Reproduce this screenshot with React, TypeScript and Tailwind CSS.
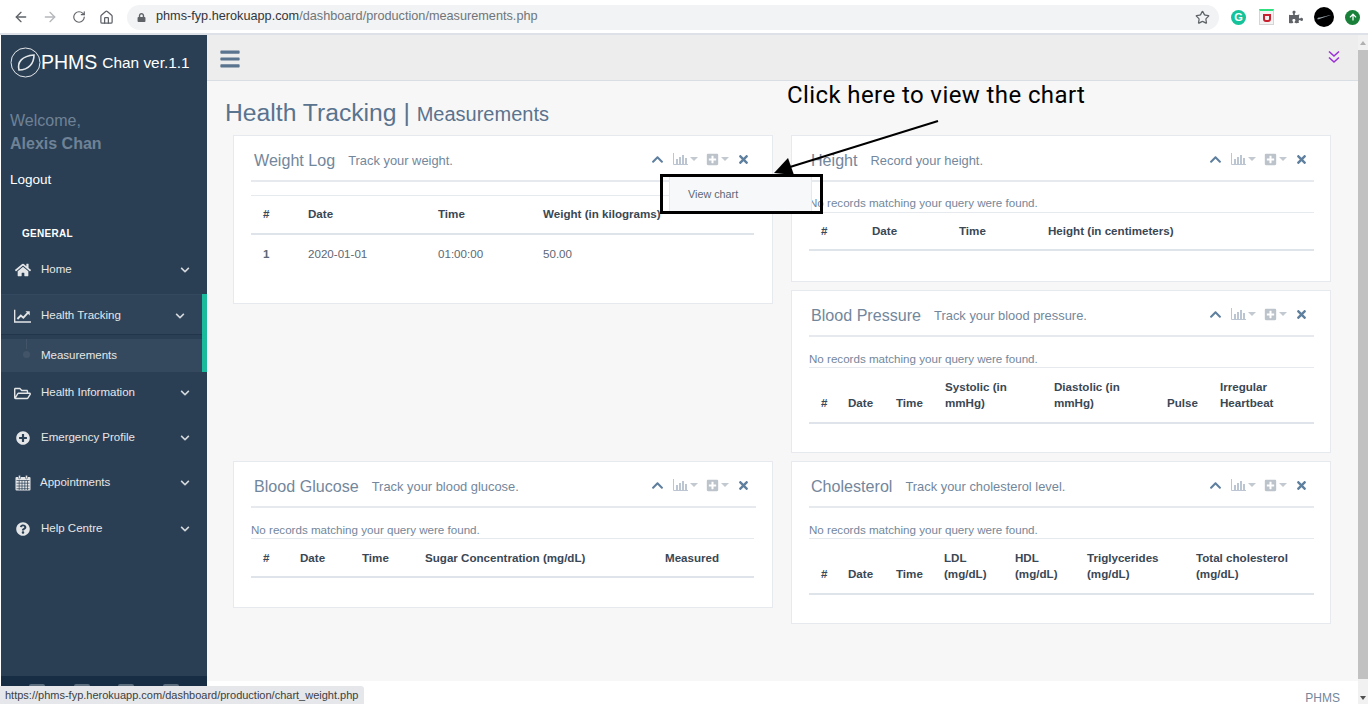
import React from "react";
import { ArrowLeft, ArrowRight, RotateCw, Home, Star } from "lucide-react";
import {
  FaHome, FaRegFolderOpen, FaPlusCircle, FaQuestionCircle,
  FaChevronDown, FaChevronUp, FaTimes, FaBars, FaPlusSquare, FaLock, FaPuzzlePiece, FaArrowUp,
} from "react-icons/fa";

const SANS = "font-['Liberation_Sans',Arial,sans-serif]";

function BarIcon() {
  return (
    <svg width="15" height="12" viewBox="0 0 15 12" className="block">
      <path d="M0.5 0V11.5H15" stroke="#bcc6d2" fill="none" />
      <path d="M3 6h2v5H3zM6 4h2v7H6zM9 2h2v9H9zM12 5h2v6h-2z" fill="#bcc6d2" />
    </svg>
  );
}

function LineChartIcon() {
  return (
    <svg width="20" height="16" viewBox="0 0 20 16" className="block">
      <path d="M0.8 0.5V15H20" stroke="#e3e5e7" strokeWidth="1.6" fill="none" />
      <path d="M4 11.5L8 7.5L11 10L16.5 4" stroke="#e3e5e7" strokeWidth="2.2" fill="none" />
      <path d="M13.5 2.5H18.5V7.5Z" fill="#e3e5e7" />
    </svg>
  );
}

function CalendarIcon() {
  return (
    <svg width="16" height="16" viewBox="0 0 16 16" className="block">
      <rect x="0.5" y="2" width="15" height="13.5" rx="1" fill="#e3e5e7" />
      <rect x="3.5" y="0.3" width="2" height="3.5" rx="0.8" fill="#e3e5e7" stroke="#2a3f54" strokeWidth="0.5" />
      <rect x="10.5" y="0.3" width="2" height="3.5" rx="0.8" fill="#e3e5e7" stroke="#2a3f54" strokeWidth="0.5" />
      <path d="M1.5 5.5H14.5M1.5 8.2H14.5M1.5 11H14.5M1.5 13.7H14.5M4.2 5.5V15M7 5.5V15M9.8 5.5V15M12.5 5.5V15" stroke="#2a3f54" strokeWidth="0.7" />
    </svg>
  );
}

function Caret() {
  return <span className="ml-[2px] w-0 h-0 border-x-[4px] border-x-transparent border-t-[4px] border-t-[#c3c9d0]" />;
}

function Tools() {
  return (
    <div className="flex items-center ml-auto">
      <FaChevronUp className="w-[13px] h-[13px] text-[#5f7f9f]" />
      <span className="ml-[9px] flex items-center"><BarIcon /><Caret /></span>
      <span className="ml-[8px] flex items-center"><FaPlusSquare className="w-[13px] h-[13px] text-[#bcc3cb]" /><Caret /></span>
      <FaTimes className="ml-[8px] w-[13px] h-[13px] text-[#5f7f9f]" />
    </div>
  );
}

type CardProps = {
  title: string;
  sub: string;
  height: number;
  headCols: { w: number; label: React.ReactNode }[];
  rows?: string[][];
  noRecords?: boolean;
  recordCls?: string;
  headCls?: string;
  titleCls?: string;
  tableW: number;
};

function Card({ title, sub, height, headCols, rows, noRecords = true, recordCls, headCls, titleCls, tableW }: CardProps) {
  return (
    <section className="bg-white border border-[#e6e9ed] px-[17px] pt-[14px] shrink-0" style={{ height }}>
      <div className={"flex items-center h-[32px] pb-[10px] border-b-2 border-[#e6e9ed] pr-[6px] -mr-[1px] " + (titleCls ?? "pl-[3px]")}>
        <h2 className="text-[16.1px] text-[#73879c] leading-[20px]">{title}</h2>
        <span className="text-[12.9px] text-[#73879c] ml-[13px] mt-[1px]">{sub}</span>
        <div className="ml-auto -mt-[2px] flex"><Tools /></div>
      </div>
      {noRecords ? (
        <div className={"text-[11.6px] text-[#73879c] leading-[14px] " + (recordCls ?? "mt-[15px] mb-[1px]")}>No records matching your query were found.</div>
      ) : (
        <div className="h-[13px]" />
      )}
      <table className="table-fixed border-collapse border-t border-[#e6e9ed] text-[11.6px] leading-[16px]" style={{ width: tableW }}>
        <colgroup>{headCols.map((c, i) => <col key={i} style={{ width: c.w }} />)}</colgroup>
        <thead>
          <tr className="border-b-2 border-[#dfe3ea]">
            {headCols.map((c, i) => (
              <th key={i} className={"text-left align-bottom font-bold text-[#3a4754] pl-[12px] pr-0 " + (headCls ?? "pt-[10px] pb-[10px]")}>{c.label}</th>
            ))}
          </tr>
        </thead>
        {rows && (
          <tbody>
            {rows.map((r, i) => (
              <tr key={i}>
                {r.map((v, j) => (
                  <td key={j} className={"pl-[12px] pt-[11px] pb-[10px] text-[#5c6873] " + (j === 0 ? "font-bold text-[#3d556f]" : "")}>{v}</td>
                ))}
              </tr>
            ))}
          </tbody>
        )}
      </table>
    </section>
  );
}

function NavItem({ icon, label, h, gap = "mr-[10px]" }: { icon: React.ReactNode; label: string; h: string; gap?: string }) {
  return (
    <div className={"flex items-center pl-[13px] text-[#e7e7e7] text-[11.5px] " + h}>
      <span className={"w-[17px] flex justify-center " + gap}>{icon}</span>
      <span>{label}</span>
      <FaChevronDown className="ml-auto w-[10px] h-[10px] text-[#d3d7db] mr-[17px]" />
    </div>
  );
}

export default function App() {
  return (
    <div className={"relative w-[1368px] h-[704px] overflow-hidden bg-white flex flex-col " + SANS}>
      {/* browser toolbar */}
      <header className="h-[35px] shrink-0 bg-white border-b-2 border-[#dfe1e8] flex items-center pl-[13px] pt-[1px] text-[#5f6368]">
        <ArrowLeft size={16} strokeWidth={2} />
        <ArrowRight size={16} strokeWidth={2} className="ml-[13px] text-[#b4b7bb]" />
        <RotateCw size={14} strokeWidth={2} className="ml-[14px]" />
        <Home size={15} strokeWidth={2} className="ml-[13px]" />
        <div className="ml-[13px] w-[1092px] h-[25px] rounded-full bg-[#f1f3f4] flex items-center pl-[10px] pr-[9px] text-[12.7px]">
          <FaLock className="w-[9px] h-[9px] text-[#5f6368]" />
          <span className="ml-[10px] text-[#33363a]">phms-fyp.herokuapp.com<span className="text-[#70757a]">/dashboard/production/measurements.php</span></span>
          <Star size={15} strokeWidth={2} className="ml-auto" />
        </div>
        <div className="ml-[12px] w-[15px] h-[15px] rounded-full bg-[#15c39a] text-white text-[11px] font-bold flex items-center justify-center">G</div>
        <div className="ml-[13px] w-[15px] h-[16px] bg-[#f3f3f3] border border-[#d5d5d5] border-t-2 border-t-[#2ee07f] flex items-center justify-center">
          <div className="w-[8px] h-[8px] border-2 border-[#c8202c] rounded-b-[3px]" />
        </div>
        <FaPuzzlePiece className="ml-[15px] w-[14px] h-[14px] text-[#5f6368]" />
        <div className="ml-[11px] w-[20px] h-[20px] rounded-full bg-black flex items-center justify-center">
          <svg width="14" height="6" viewBox="0 0 14 6"><path d="M0 5 C2 6 4 4 14 1 C8 2 3 4 1.5 3.5Z" fill="#9aa7ad" /></svg>
        </div>
        <div className="ml-[11px] w-[15px] h-[15px] rounded-full bg-[#188038] flex items-center justify-center">
          <FaArrowUp className="w-[8px] h-[8px] text-white" />
        </div>
      </header>

      <div className="flex flex-1 min-h-0">
        {/* sidebar */}
        <aside className="w-[206px] shrink-0 ml-[1px] bg-[#2a3f54] flex flex-col relative">
          <div className="flex items-center h-[54px] pl-[9px] text-white pt-[1px]">
            <svg width="31" height="31" viewBox="0 0 31 31" fill="none" stroke="#e4e7ea" className="shrink-0">
              <circle cx="15.5" cy="15.5" r="14.5" strokeWidth="1" />
              <path d="M9 23 C7 15 12 9 24 8 C24 16 19 23 9 23Z" strokeWidth="1.6" />
            </svg>
            <span className="text-[19.5px]">PHMS</span>
            <span className="text-[15.4px] ml-[5px] mt-[1px]">Chan ver.1.1</span>
          </div>
          <div className="pl-[9px] pt-[20px] text-[16px] leading-[23px] text-[#6f8296]">
            <div>Welcome,</div>
            <div className="font-bold">Alexis Chan</div>
          </div>
          <div className="pl-[9px] mt-[15px] text-[13.5px] leading-[20px] text-white">Logout</div>
          <div className="pl-[21px] mt-[37px] text-[10px] font-bold tracking-[0.3px] leading-[14px] text-white">GENERAL</div>
          <div className="mt-[3px]">
            <NavItem icon={<FaHome className="w-[16px] h-[16px] text-[#e3e5e7]" />} label="Home" h="h-[51px]" />
            <div className="border-r-[5px] border-[#1abb9c] h-[78px] flex flex-col -mt-[1px]">
              <div className="h-[41px] bg-[#2f4459] border-t border-[#33495f] border-b border-b-[#22354a]">
                <NavItem icon={<LineChartIcon />} label="Health Tracking" h="h-[41px]" />
              </div>
              <div className="mt-[4px] flex-1 bg-[#35495e] flex items-center pl-[40px] text-[11.5px] text-[#e7e7e7] relative">
                Measurements
                <span className="absolute left-[25px] top-0 h-[10px] w-px bg-[#425468]" />
                <span className="absolute left-[22px] top-[12px] w-[7px] h-[7px] rounded-full bg-[#425468]" />
              </div>
            </div>
            <NavItem icon={<FaRegFolderOpen className="w-[17px] h-[17px] text-[#e3e5e7]" />} label="Health Information" h="h-[42px]" />
            <NavItem icon={<FaPlusCircle className="w-[14px] h-[14px] text-[#e3e5e7]" />} label="Emergency Profile" h="h-[48px]" />
            <NavItem icon={<CalendarIcon />} label="Appointments" h="h-[42px]" gap="mr-[9px]" />
            <NavItem icon={<FaQuestionCircle className="w-[14px] h-[14px] text-[#e3e5e7]" />} label="Help Centre" h="h-[50px]" />
          </div>
          <div className="mt-auto h-[28px] bg-[#172d44] shrink-0 flex items-start justify-around pt-[8px] px-[14px]">
            <span className="w-[16px] h-[3px] bg-[#5c6d7e] rounded-t-[2px]" />
            <span className="w-[16px] h-[3px] bg-[#5c6d7e] rounded-t-[2px]" />
            <span className="w-[16px] h-[3px] bg-[#5c6d7e] rounded-t-[2px]" />
            <span className="w-[16px] h-[3px] bg-[#5c6d7e] rounded-t-[2px]" />
          </div>
        </aside>

        {/* main */}
        <main className="flex-1 min-w-0 flex flex-col bg-[#f7f7f7] relative">
          <div className="h-[46px] shrink-0 bg-[#ededed] border-b border-[#d9dee4] flex items-center pl-[12px] pr-[18px]">
            <FaBars className="w-[22px] h-[22px] text-[#5a738e] mt-[2px]" />
            <svg width="12" height="14" viewBox="0 0 12 14" fill="none" stroke="#9b30d9" strokeWidth="1.6" className="ml-auto -mt-[1px]">
              <path d="M1 1.5L6 6L11 1.5M1 7.5L6 12L11 7.5" />
            </svg>
          </div>
          <div className="flex-1 min-h-0 pl-[18px]">
            <h1 className="text-[24.7px] leading-[28px] text-[#5a738e] mt-[18px]">
              Health Tracking | <span className="text-[20px]">Measurements</span>
            </h1>
            <div className="flex gap-[18px] ml-[8px] mt-[7px] w-[1098px]">
              <div className="w-[540px] flex flex-col">
                <Card
                  title="Weight Log" sub="Track your weight." height={169} noRecords={false} tableW={503} headCls="pt-[10px] pb-[11px]"
                  headCols={[{ w: 45, label: "#" }, { w: 130, label: "Date" }, { w: 105, label: "Time" }, { w: 223, label: "Weight (in kilograms)" }]}
                  rows={[["1", "2020-01-01", "01:00:00", "50.00"]]}
                />
                <div className="h-[157px]" />
                <Card
                  title="Blood Glucose" sub="Track your blood glucose." height={147} tableW={503} headCls="pt-[11px] pb-[10px]"
                  headCols={[{ w: 37, label: "#" }, { w: 62, label: "Date" }, { w: 63, label: "Time" }, { w: 240, label: "Sugar Concentration (mg/dL)" }, { w: 101, label: "Measured" }]}
                />
              </div>
              <div className="w-[540px] flex flex-col gap-[8px]">
                <Card
                  title="Height" sub="Record your height." height={147} tableW={505} recordCls="mt-[14px] mb-[2px]" titleCls="pl-[2px]"
                  headCols={[{ w: 51, label: "#" }, { w: 87, label: "Date" }, { w: 89, label: "Time" }, { w: 278, label: "Height (in centimeters)" }]}
                />
                <Card
                  title="Blood Pressure" sub="Track your blood pressure." height={163} tableW={505} headCls="pt-[11px] pb-[11px]" titleCls="pl-[2px]"
                  headCols={[{ w: 27, label: "#" }, { w: 48, label: "Date" }, { w: 49, label: "Time" }, { w: 109, label: <>Systolic (in<br />mmHg)</> }, { w: 113, label: <>Diastolic (in<br />mmHg)</> }, { w: 53, label: "Pulse" }, { w: 106, label: <>Irregular<br />Heartbeat</> }]}
                />
                <Card
                  title="Cholesterol" sub="Track your cholesterol level." height={163} tableW={505} headCls="pt-[11px] pb-[11px]" titleCls="pl-[2px]"
                  headCols={[{ w: 27, label: "#" }, { w: 48, label: "Date" }, { w: 48, label: "Time" }, { w: 71, label: <>LDL<br />(mg/dL)</> }, { w: 72, label: <>HDL<br />(mg/dL)</> }, { w: 109, label: <>Triglycerides<br />(mg/dL)</> }, { w: 130, label: <>Total cholesterol<br />(mg/dL)</> }]}
                />
              </div>
            </div>
          </div>
          <footer className="absolute left-0 right-0 bottom-0 h-[23px] bg-white flex items-end justify-end pr-[18px] text-[12px] text-[#73879c] leading-[12px]">PHMS</footer>
        </main>

        {/* scrollbar */}
        <div className="w-[10px] shrink-0 bg-[#f1f1f1] relative">
          <span className="absolute left-[2px] top-[6px] w-0 h-0 border-x-[3px] border-x-transparent border-b-[4px] border-b-[#b0b0b0]" />
          <div className="absolute left-0 right-0 top-[15px] bottom-[25px] bg-[#c1c1c1]" />
          <span className="absolute left-[2px] bottom-[4px] w-0 h-0 border-x-[3px] border-x-transparent border-t-[4px] border-t-[#505050]" />
        </div>
      </div>

      {/* annotation */}
      <div className="absolute left-[787px] top-[81px] text-[24px] leading-[28px] text-black font-['Roboto',sans-serif] tracking-[0.4px]">Click here to view the chart</div>
      <svg className="absolute left-[770px] top-[115px]" width="175" height="65" viewBox="0 0 175 65">
        <path d="M168 6 L20 52" stroke="#000" strokeWidth="2" />
        <path d="M4 58 L18 43 L24 60 Z" fill="#000" />
      </svg>
      <div className="absolute left-[660px] top-[174px] w-[163px] h-[40px] border-[3px] border-black">
        <div className="ml-[6px] h-full w-[143px] bg-[#f7f8fa] border-x border-[#e6e9ed] text-[10.8px] text-[#5c6873] pl-[18px] pt-[9px]">View chart</div>
      </div>

      {/* status tooltip */}
      <div className="absolute left-0 bottom-0 h-[18px] w-[364px] bg-[#e5e7ea] rounded-tr-[3px] pl-[5px] text-[11px] leading-[18px] text-[#3c4043] whitespace-nowrap">
        https://phms-fyp.herokuapp.com/dashboard/production/chart_weight.php
      </div>
    </div>
  );
}
